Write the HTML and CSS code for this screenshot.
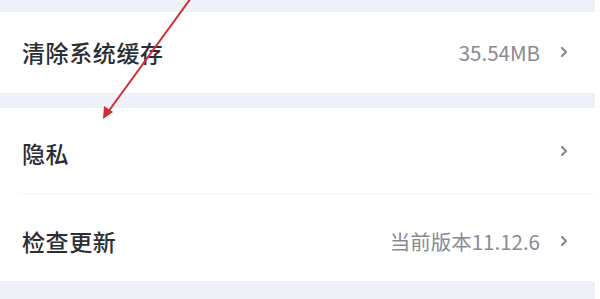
FILE: index.html
```html
<!DOCTYPE html>
<html lang="zh-CN">
<head>
    <meta charset="UTF-8">
    <meta name="viewport" content="width=device-width, initial-scale=1.0">
    <title>设置</title>
    <link rel="stylesheet" href="styles.css">
</head>
<body>
    <div class="page">
        <div class="card">
            <div class="row row-cache">
                <span class="row-title">清除系统缓存</span>
                <span class="row-value">35.54MB</span>
                <svg class="chevron" viewBox="0 0 6 10"><polyline points="1,1 5,5 1,9"/></svg>
            </div>
        </div>

        <div class="card">
            <div class="row row-privacy">
                <span class="row-title">隐私</span>
                <svg class="chevron" viewBox="0 0 6 10"><polyline points="1,1 5,5 1,9"/></svg>
            </div>
            <div class="divider"></div>
            <div class="row row-update">
                <span class="row-title">检查更新</span>
                <span class="row-value">当前版本11.12.6</span>
                <svg class="chevron" viewBox="0 0 6 10"><polyline points="1,1 5,5 1,9"/></svg>
            </div>
        </div>

        <!-- 标注箭头 -->
        <svg class="arrow" width="600" height="130" viewBox="0 0 600 130">
            <line x1="191" y1="-2" x2="108" y2="112"/>
            <polygon points="103,119 104,106 113,112"/>
        </svg>
    </div>
</body>
</html>
```

FILE: styles.css
```css
body {
    margin: 0;
    padding: 0;
    background: #ffffff;
    font-family: "Noto Sans CJK SC", "Noto Sans", sans-serif;
}

.page {
    position: relative;
    width: 595px;
    height: 299px;
    padding-top: 12px;
    box-sizing: border-box;
    background: #eef2f8;
    overflow: hidden;
}

.card {
    background: #ffffff;
    margin-bottom: 15px;
}

.row {
    display: flex;
    align-items: center;
    padding: 0 28px 0 22px;
    box-sizing: border-box;
}

.row-cache {
    height: 81px;
    padding-bottom: 2px;
}

.row-privacy {
    height: 85px;
    padding-top: 4px;
}

.divider {
    height: 1px;
    margin-left: 18px;
    background: #f4f5f7;
}

.row-update {
    height: 87px;
    padding-top: 6px;
}

.row-title {
    flex: 1;
    font-size: 23px;
    font-weight: 500;
    color: #2a2e35;
    letter-spacing: 0.6px;
}

.row-value {
    font-size: 20.5px;
    color: #888b92;
    margin-right: 21px;
}

.chevron {
    width: 6px;
    height: 10px;
    fill: none;
    stroke: #8a8d93;
    stroke-width: 2.4;
    stroke-linecap: round;
    stroke-linejoin: round;
}

.row-privacy .chevron {
    margin-top: -4px;
}

.arrow {
    position: absolute;
    left: 0;
    top: 0;
}

.arrow line {
    stroke: #cf2f32;
    stroke-width: 2;
}

.arrow polygon {
    fill: #cf2f32;
}
```
